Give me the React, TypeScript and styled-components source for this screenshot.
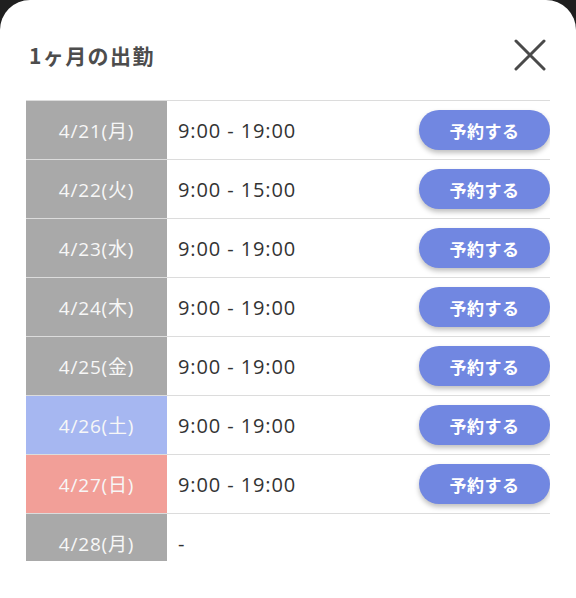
import React from "react";
import styled, { createGlobalStyle } from "styled-components";

const GlobalStyle = createGlobalStyle`
  html, body {
    margin: 0;
    padding: 0;
    background: #1f1f1f;
  }
  body {
    font-family: "Open Sans", "Noto Sans CJK JP", sans-serif;
    overflow: hidden;
  }
`;

const Sheet = styled.div`
  width: 576px;
  height: 598px;
  background: #fff;
  border-radius: 30px 30px 0 0;
  display: flex;
  flex-direction: column;
`;

const Header = styled.div`
  display: flex;
  align-items: center;
  justify-content: space-between;
  height: 100px;
  padding: 10px 28px 0 29px;
  box-sizing: border-box;
`;

const Title = styled.h2`
  margin: 0;
  font-family: "Noto Sans CJK JP", sans-serif;
  font-size: 21px;
  font-weight: 700;
  color: #4d4d4d;
  letter-spacing: 1.4px;
`;

const CloseButton = styled.button`
  width: 36px;
  height: 36px;
  padding: 0;
  border: none;
  background: none;
  display: flex;
  align-items: center;
  justify-content: center;
`;

const List = styled.div`
  margin: 0 26px;
  height: 460px;
  overflow: hidden;
  border-top: 1px solid #dcdcdc;
`;

const Row = styled.div`
  display: flex;
  align-items: center;
  height: 59px;
  box-sizing: border-box;
  border-bottom: 1px solid #dcdcdc;
`;

const dayColors = {
  weekday: "#a9a9a9",
  sat: "#a6b7f1",
  sun: "#f29f98",
};

const DateCell = styled.div<{ $kind: keyof typeof dayColors }>`
  width: 141px;
  height: 100%;
  flex-shrink: 0;
  display: flex;
  align-items: center;
  justify-content: center;
  background: ${({ $kind }) => dayColors[$kind]};
  color: #f7f7f7;
  font-size: 19px;
  letter-spacing: 0.8px;
`;

const Hours = styled.div`
  flex: 1;
  padding-left: 11px;
  font-size: 20px;
  letter-spacing: 0.9px;
  color: #333;
`;

const ReserveButton = styled.button`
  width: 131px;
  height: 40px;
  border: none;
  border-radius: 20px;
  background: #7187e1;
  color: #fff;
  font-family: "Noto Sans CJK JP", sans-serif;
  font-size: 17px;
  font-weight: 700;
  letter-spacing: 0.5px;
  box-shadow: 0 3px 5px rgba(0, 0, 0, 0.25);
  flex-shrink: 0;
`;

type Shift = {
  date: string;
  kind: keyof typeof dayColors;
  hours: string | null;
};

const shifts: Shift[] = [
  { date: "4/21(月)", kind: "weekday", hours: "9:00 - 19:00" },
  { date: "4/22(火)", kind: "weekday", hours: "9:00 - 15:00" },
  { date: "4/23(水)", kind: "weekday", hours: "9:00 - 19:00" },
  { date: "4/24(木)", kind: "weekday", hours: "9:00 - 19:00" },
  { date: "4/25(金)", kind: "weekday", hours: "9:00 - 19:00" },
  { date: "4/26(土)", kind: "sat", hours: "9:00 - 19:00" },
  { date: "4/27(日)", kind: "sun", hours: "9:00 - 19:00" },
  { date: "4/28(月)", kind: "weekday", hours: null },
];

export default function App() {
  return (
    <>
      <GlobalStyle />
      <Sheet>
        <Header>
          <Title>1ヶ月の出勤</Title>
          <CloseButton aria-label="閉じる">
            <svg width="32" height="32" viewBox="0 0 32 32">
              <path d="M2 2 L30 30 M30 2 L2 30" stroke="#4a4a4a" strokeWidth="3" strokeLinecap="round" />
            </svg>
          </CloseButton>
        </Header>
        <List>
          {shifts.map((s) => (
            <Row key={s.date}>
              <DateCell $kind={s.kind}>{s.date}</DateCell>
              <Hours>{s.hours ?? "-"}</Hours>
              {s.hours && <ReserveButton>予約する</ReserveButton>}
            </Row>
          ))}
        </List>
      </Sheet>
    </>
  );
}
